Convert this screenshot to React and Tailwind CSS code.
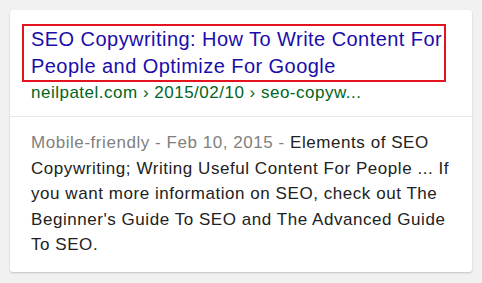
import React from "react";

const App = () => {
  return (
    <div className="w-[482px] h-[283px] bg-[#f1f1f1] p-[10px] font-['Liberation_Sans',Arial,sans-serif]">
      <div className="w-[462px] h-[262px] bg-white rounded-[3px] shadow-[0_1px_2px_rgba(0,0,0,0.2)]">
        <div className="pt-[14px] pl-[12px] pr-[24px]">
          <div className="border-2 border-[#e3141f] pl-[7px] pt-0 h-[58px] w-[424px]">
            <a className="block text-[20px] leading-[27px] tracking-[0.45px] text-[#1a0dab]">
              SEO Copywriting: How To Write Content For People and Optimize For Google
            </a>
          </div>
          <div className="pl-[9px] text-[17px] leading-[22px] tracking-[0.5px] text-[#006621] whitespace-nowrap">
            neilpatel.com › 2015/02/10 › seo-copyw...
          </div>
        </div>
        <div className="mt-[12px] border-t border-[#e8e8e8]" />
        <p className="pt-[13px] pl-[21px] pr-[10px] text-[17px] leading-[25.5px] tracking-[0.55px] text-[#222]">
          <span className="text-[#808080]">Mobile-friendly - Feb 10, 2015 - </span>
          Elements of SEO Copywriting; Writing Useful Content For People ... If you want more information on SEO, check out The Beginner's Guide To SEO and The Advanced Guide To SEO.
        </p>
      </div>
    </div>
  );
};

export default App;
